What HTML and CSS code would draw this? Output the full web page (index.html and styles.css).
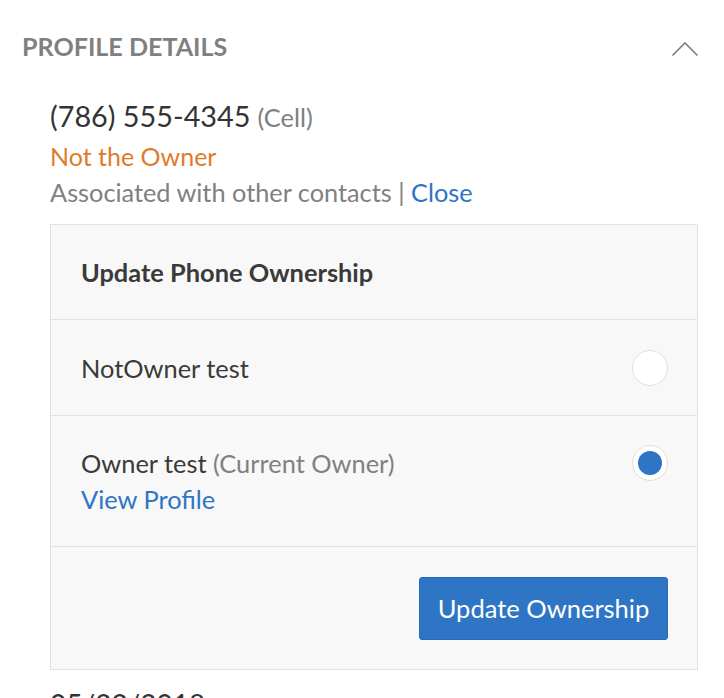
FILE: index.html
```html
<!DOCTYPE html>
<html>
<head>
<meta charset="utf-8">
<link rel="stylesheet" href="styles.css">
</head>
<body>
<div class="panel">
  <div class="panel-head">
    <h2 class="panel-title">PROFILE DETAILS</h2>
    <svg class="chevron" width="28" height="16" viewBox="0 0 28 16"><polyline points="1.5,14.5 14,2 26.5,14.5" fill="none" stroke="#808080" stroke-width="1.6"/></svg>
  </div>
  <div class="panel-body">
    <div class="phone"><span class="number">(786) 555-4345</span> <span class="type">(Cell)</span></div>
    <div class="status">Not the Owner</div>
    <div class="assoc">Associated with other contacts <span class="sep">|</span> <a class="link">Close</a></div>
    <div class="box">
      <div class="box-row box-title">Update Phone Ownership</div>
      <div class="box-row option">
        <div class="opt-text">NotOwner test</div>
        <span class="radio"></span>
      </div>
      <div class="box-row option owner">
        <div class="opt-text">
          <div>Owner test <span class="muted">(Current Owner)</span></div>
          <a class="link">View Profile</a>
        </div>
        <span class="radio checked"></span>
      </div>
      <div class="box-row actions">
        <button class="btn">Update Ownership</button>
      </div>
    </div>
    <div class="date">05/22/2018</div>
  </div>
</div>
</body>
</html>
```
FILE: styles.css
```css
html, body {
  margin: 0;
  padding: 0;
  background: #fff;
}
body {
  font-family: Lato, "Open Sans", sans-serif;
  color: #3a3a3a;
  width: 724px;
  height: 698px;
  overflow: hidden;
}
.panel {
  padding: 30px 26px 0 22px;
}
.panel-head {
  display: flex;
  justify-content: space-between;
  align-items: center;
  height: 32px;
}
.panel-title {
  margin: 0;
  font-size: 25.1px;
  font-weight: 700;
  color: #808080;
  line-height: 32px;
}
.chevron {
  margin-top: 6px;
  margin-right: -1px;
}
.panel-body {
  padding-left: 28px;
  padding-top: 37px;
}
.phone {
  line-height: 34px;
  white-space: nowrap;
}
.number {
  font-size: 28.8px;
  color: #333;
}
.type {
  font-size: 25.4px;
  color: #808080;
  margin-left: 3px;
}
.status {
  font-size: 25px;
  color: #e07b2c;
  line-height: 36px;
}
.assoc {
  font-size: 25.3px;
  color: #808080;
  line-height: 36px;
}
.link {
  color: #2e75c6;
  text-decoration: none;
}
.box {
  margin-top: 14px;
  background: #f8f8f8;
  border: 1px solid #e2e2e2;
  width: 646px;
}
.box-row {
  border-top: 1px solid #e2e2e2;
  padding: 0 29px 0 30px;
}
.box-row:first-child {
  border-top: none;
}
.box-title {
  height: 94px;
  display: flex;
  align-items: center;
  font-size: 25.4px;
  font-weight: 700;
  color: #3a3a3a;
}
.option {
  display: flex;
  justify-content: space-between;
  align-items: center;
  font-size: 25.4px;
  color: #3a3a3a;
}
.option:not(.owner) {
  height: 95px;
}
.owner {
  height: 131px;
  align-items: flex-start;
  padding-top: 29px;
  box-sizing: border-box;
  line-height: 36px;
}
.muted {
  color: #808080;
}
.radio {
  width: 34px;
  height: 34px;
  border-radius: 50%;
  background: #fff;
  border: 1px solid #e0e0e0;
  display: flex;
  align-items: center;
  justify-content: center;
  flex: none;
}
.radio.checked::after {
  content: "";
  width: 24px;
  height: 24px;
  border-radius: 50%;
  background: #2e75c6;
}
.actions {
  height: 122px;
  display: flex;
  justify-content: flex-end;
  align-items: center;
}
.btn {
  font-family: Lato, "Open Sans", sans-serif;
  font-size: 25.5px;
  color: #fff;
  background: #2e75c6;
  border: 1px solid #2a6bb5;
  border-radius: 3px;
  width: 249px;
  height: 63px;
  padding: 0;
  cursor: pointer;
}
.date {
  margin-top: 17px;
  font-size: 28px;
  line-height: 34px;
  color: #333;
}
```
